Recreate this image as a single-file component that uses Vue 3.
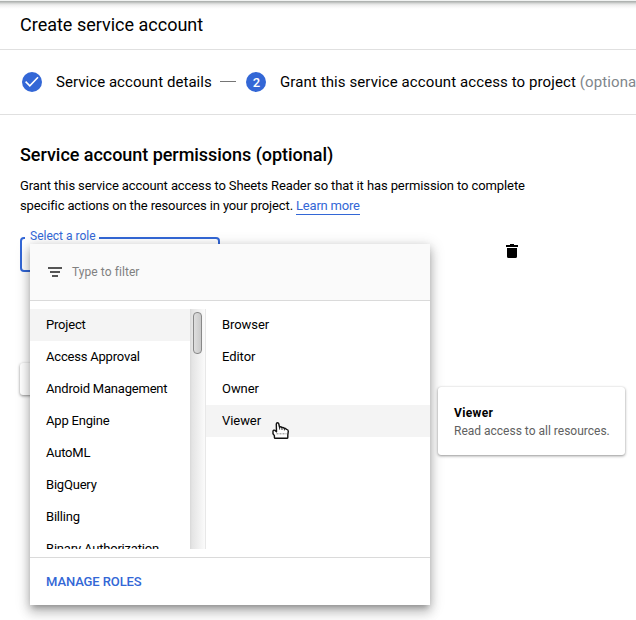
<script setup>
import { ref } from 'vue'

const categories = [
  'Project', 'Access Approval', 'Android Management', 'App Engine',
  'AutoML', 'BigQuery', 'Billing', 'Binary Authorization',
]
const roles = ['Browser', 'Editor', 'Owner', 'Viewer']
const activeCategory = ref('Project')
const hoveredRole = ref('Viewer')
</script>

<template>
  <div class="page">
    <header class="title-bar">
      <h1>Create service account</h1>
    </header>

    <nav class="stepper">
      <span class="badge">
        <svg width="20" height="20" viewBox="0 0 20 20"><path d="M3.6 9.6l4.2 4.2L16 5.2" fill="none" stroke="#fff" stroke-width="1.6" /></svg>
      </span>
      <span class="step-label first">Service account details</span>
      <span class="dash"></span>
      <span class="badge number">2</span>
      <span class="step-label second">Grant this service account access to project <span class="muted">(optional)</span></span>
    </nav>

    <main class="content">
      <h2>Service account permissions (optional)</h2>
      <p>
        Grant this service account access to Sheets Reader so that it has permission to complete<br />
        <span class="line-two">specific actions on the resources in your project. <a class="learn">Learn more</a></span>
      </p>
      <div class="role-row">
        <div class="select"><span class="float-label">Select a role</span></div>
        <svg class="trash" width="12" height="14" viewBox="0 0 12 14">
          <path d="M0 1h4V0h4v1h4v2H0zM1 4h10v8.5a1.5 1.5 0 0 1-1.5 1.5h-7A1.5 1.5 0 0 1 1 12.5z" />
        </svg>
      </div>
      <div class="add-role"></div>
    </main>

    <section class="menu">
      <div class="filter">
        <svg width="14" height="10" viewBox="0 0 14 10"><path d="M0 0h14v2H0zM2 4h10v2H2zM4 8h6v2H4z" fill="#555" /></svg>
        <span class="placeholder">Type to filter</span>
      </div>
      <div class="lists">
        <ul class="categories">
          <li v-for="c in categories" :key="c" :class="{ active: c === activeCategory }">{{ c }}</li>
        </ul>
        <div class="scrollbar"><div class="thumb"></div></div>
        <ul class="roles">
          <li v-for="r in roles" :key="r" :class="{ active: r === hoveredRole }">{{ r }}</li>
        </ul>
      </div>
      <div class="menu-footer">MANAGE ROLES</div>
    </section>

    <aside class="tooltip">
      <strong>Viewer</strong>
      <span>Read access to all resources.</span>
    </aside>

    <svg class="pointer" width="18" height="18" viewBox="0 0 18 18">
      <path d="M4.3 2Q4.4 .8 5.5 .8Q6.6 .8 6.8 2L7.5 5Q9 4.4 9.8 5.5Q11.3 5 12.2 6.3Q13.6 5.9 14.4 7.4Q16.2 7.6 16.3 9.2L15.8 13V15.5Q15.8 16.3 15 16.3H3.2Q2.4 16.3 2.4 15.5V13.6L1 11.8V9Q1.6 7.6 3 8.4L4.5 9.8Z" fill="#fff" stroke="#111" stroke-width="1.4" stroke-linejoin="round" />
      <path d="M7.6 5V7.6M10 5.5V8M12.4 6.4V8.4" fill="none" stroke="#111" stroke-width=".9" />
      <path d="M4.5 11.8h10" fill="none" stroke="#888" stroke-width="1" stroke-dasharray="2 1" />
    </svg>
  </div>
</template>

<style>
body {
  background: #fff;
}
</style>

<style scoped>
.page {
  position: relative;
  width: 636px;
  height: 620px;
  overflow: hidden;
  box-sizing: border-box;
  font-family: Roboto, "Liberation Sans", sans-serif;
  font-size: 13px;
  color: #000;
  white-space: nowrap;
}
.page * {
  box-sizing: border-box;
}
.title-bar {
  height: 50px;
  padding: 14px 20px 0;
  border-bottom: 1px solid #e0e0e0;
  background: linear-gradient(#f1f3f2 0, #f1f3f2 1px, #abafad 1px, #b5b8b6 2px, #cfd1d0 3px, #e0e1e0 4px, #eeeeee 5px, #f8f8f8 7px, #fff 9px);
}
h1 {
  margin: 0;
  font-size: 18px;
  font-weight: 400;
  line-height: 22px;
}
.stepper {
  display: flex;
  align-items: center;
  height: 65px;
  padding: 0 0 1px 22px;
  border-bottom: 1px solid #e0e0e0;
}
.badge {
  display: flex;
  flex: none;
  align-items: center;
  justify-content: center;
  width: 20px;
  height: 20px;
  border-radius: 50%;
  background: #3367d6;
  color: #fff;
}
.number {
  padding: 1px 0 0 1px;
  font-size: 13px;
  font-weight: 500;
}
.step-label {
  flex: none;
  font-size: 15px;
  line-height: 20px;
}
.first {
  width: 156px;
  margin-left: 14px;
  letter-spacing: 0.05px;
}
.second {
  margin-left: 14px;
  letter-spacing: 0.1px;
}
.dash {
  flex: none;
  width: 16px;
  height: 1px;
  margin: 0 10px 0 8px;
  background: #757575;
}
.muted {
  color: #80868b;
}
.content {
  padding: 30px 20px 0;
}
h2 {
  margin: 0;
  font-size: 18px;
  font-weight: 500;
  line-height: 20px;
  letter-spacing: -0.04px;
}
p {
  margin: 11px 0 0;
  font-size: 13px;
  line-height: 20px;
  letter-spacing: -0.103px;
}
.line-two {
  letter-spacing: -0.13px;
}
.learn {
  display: inline-block;
  height: 18px;
  line-height: 18px;
  border-bottom: 1px solid #3367d6;
  letter-spacing: -0.2px;
  color: #3367d6;
}
.role-row {
  display: flex;
  justify-content: space-between;
  width: 498px;
  margin-top: 21px;
}
.select {
  width: 200px;
  height: 35px;
  border: 2px solid #3367d6;
  border-radius: 4px;
}
.float-label {
  display: block;
  width: 74px;
  margin: -11px 0 0 3px;
  padding-left: 5px;
  background: #fff;
  font-size: 12px;
  line-height: 16px;
  color: #3367d6;
}
.trash {
  margin-top: 7px;
}
.add-role {
  width: 120px;
  height: 32px;
  margin-top: 91px;
  border-radius: 3px;
  background: #fff;
  box-shadow: 0 1px 3px rgba(0, 0, 0, 0.45);
}
.menu {
  position: absolute;
  left: 30px;
  top: 244px;
  width: 400px;
  height: 361px;
  display: flex;
  flex-direction: column;
  background: #fff;
  box-shadow: 0 5px 5px -3px rgba(0, 0, 0, 0.2), 0 8px 10px 1px rgba(0, 0, 0, 0.14), 0 3px 14px 2px rgba(0, 0, 0, 0.12), 0 2px 8px rgba(0, 0, 0, 0.12);
}
.filter {
  display: flex;
  align-items: center;
  height: 57px;
  padding: 0 18px 1px;
  border-bottom: 1px solid #dadada;
  background: #fafafa;
}
.placeholder {
  margin-left: 10px;
  font-size: 12px;
  letter-spacing: 0.07px;
  color: #808080;
}
.lists {
  display: flex;
  height: 240px;
  margin: 8px 0;
}
ul {
  margin: 0;
  padding: 0;
  list-style: none;
  overflow: hidden;
}
li {
  height: 32px;
  padding-left: 16px;
  line-height: 32px;
}
.active {
  background: #f4f4f4;
}
.categories {
  width: 160px;
  letter-spacing: -0.2px;
}
.scrollbar {
  width: 15px;
  padding: 3px 0 0 3px;
  background: linear-gradient(to right, #d8d8d8, #e4e4e4 2px, #fbfbfb);
}
.thumb {
  width: 9px;
  height: 42px;
  border: 1px solid #888;
  border-radius: 4px;
  background: linear-gradient(to right, #dedede, #c9c9c9);
}
.roles {
  flex: 1;
  border-left: 1px solid #e8e8e8;
  letter-spacing: -0.06px;
}
.menu-footer {
  flex: 1;
  padding-left: 16px;
  border-top: 1px solid #dadada;
  line-height: 47px;
  font-weight: 500;
  letter-spacing: -0.1px;
  color: #3367d6;
}
.tooltip {
  position: absolute;
  left: 438px;
  top: 387px;
  width: 187px;
  height: 68px;
  display: flex;
  flex-direction: column;
  padding: 17px 16px 0;
  border-radius: 3px;
  background: #fff;
  font-size: 12px;
  line-height: 18px;
  color: #616161;
  box-shadow: 0 1px 3px rgba(0, 0, 0, 0.42), 0 0 1px rgba(0, 0, 0, 0.15);
}
.tooltip strong {
  font-weight: 700;
  letter-spacing: 0.35px;
  color: #000;
}
.pointer {
  position: absolute;
  left: 272px;
  top: 422px;
}
</style>
